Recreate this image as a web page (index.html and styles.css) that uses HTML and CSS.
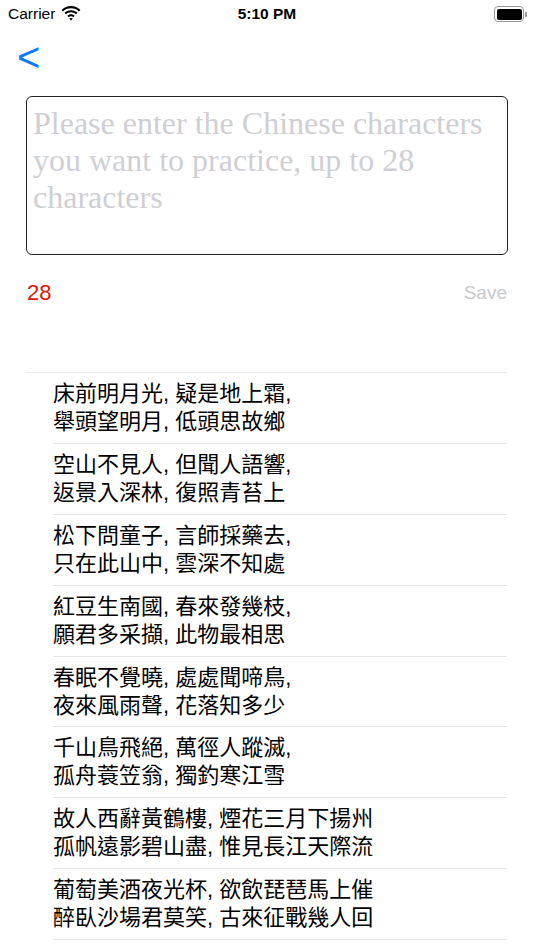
FILE: index.html
```html
<!DOCTYPE html>
<html>
<head>
<meta charset="utf-8">
<link rel="stylesheet" href="styles.css">
</head>
<body>
<div class="screen">
  <div class="status">
    <div class="status-left">
      <span class="carrier">Carrier</span>
      <svg class="wifi" width="20" height="15" viewBox="0 0 20 15">
        <path d="M10 2.2c3.1 0 5.9 1.2 8 3.2l1.4-1.5C16.9 1.5 13.6 0 10 0S3.1 1.5.6 3.9L2 5.4c2.1-2 4.9-3.2 8-3.2z" fill="#000"/>
        <path d="M10 6.3c2 0 3.8.8 5.1 2l1.4-1.5C14.8 5.2 12.5 4.2 10 4.2S5.2 5.2 3.5 6.8l1.4 1.5c1.3-1.2 3.1-2 5.1-2z" fill="#000"/>
        <path d="M10 10.3c.9 0 1.7.3 2.3.9l1.4-1.5c-1-.9-2.3-1.5-3.7-1.5s-2.7.6-3.7 1.5l1.4 1.5c.6-.6 1.4-.9 2.3-.9z" fill="#000"/>
        <path d="M10 14.6l1.9-2c-.5-.4-1.2-.7-1.9-.7s-1.4.3-1.9.7z" fill="#000"/>
      </svg>
    </div>
    <div class="time">5:10 PM</div>
    <div class="status-right">
      <div class="battery"><div class="battery-fill"></div></div>
      <div class="battery-nub"></div>
    </div>
  </div>

  <div class="nav">
    <span class="back">&lt;</span>
  </div>

  <div class="editor">
    <div class="placeholder">Please enter the Chinese characters you want to practice, up to 28 characters</div>
  </div>

  <div class="meta">
    <span class="count">28</span>
    <span class="save">Save</span>
  </div>

  <div class="list">
    <div class="row"><div class="cell">床前明月光, 疑是地上霜,<br>舉頭望明月, 低頭思故鄉</div></div>
    <div class="row"><div class="cell">空山不見人, 但聞人語響,<br>返景入深林, 復照青苔上</div></div>
    <div class="row"><div class="cell">松下問童子, 言師採藥去,<br>只在此山中, 雲深不知處</div></div>
    <div class="row"><div class="cell">紅豆生南國, 春來發幾枝,<br>願君多采擷, 此物最相思</div></div>
    <div class="row"><div class="cell">春眠不覺曉, 處處聞啼鳥,<br>夜來風雨聲, 花落知多少</div></div>
    <div class="row"><div class="cell">千山鳥飛絕, 萬徑人蹤滅,<br>孤舟蓑笠翁, 獨釣寒江雪</div></div>
    <div class="row"><div class="cell">故人西辭黃鶴樓, 煙花三月下揚州<br>孤帆遠影碧山盡, 惟見長江天際流</div></div>
    <div class="row"><div class="cell">葡萄美酒夜光杯, 欲飲琵琶馬上催<br>醉臥沙場君莫笑, 古來征戰幾人回</div></div>
  </div>
</div>
</body>
</html>
```

FILE: styles.css
```css
html, body {
  margin: 0;
  padding: 0;
  background: #fff;
}
.screen {
  width: 534px;
  height: 950px;
  overflow: hidden;
  font-family: "Liberation Sans", "Noto Sans CJK TC", sans-serif;
  color: #000;
}
.status {
  height: 28px;
  display: flex;
  align-items: center;
  justify-content: space-between;
  padding: 0 7px 0 8px;
  position: relative;
  font-size: 15.5px;
}
.status-left {
  display: flex;
  align-items: center;
  gap: 6px;
}
.wifi { margin-top: -1px; }
.time {
  position: absolute;
  left: 0;
  right: 0;
  text-align: center;
  font-weight: bold;
  pointer-events: none;
}
.status-right {
  display: flex;
  align-items: center;
  gap: 1px;
}
.battery {
  width: 25px;
  height: 11px;
  border: 1.5px solid #999;
  border-radius: 4px;
  padding: 1.5px;
  box-sizing: content-box;
}
.battery-fill {
  width: 100%;
  height: 100%;
  background: #000;
  border-radius: 2px;
}
.battery-nub {
  width: 2px;
  height: 5px;
  background: #999;
  border-radius: 0 1px 1px 0;
}
.nav {
  height: 68px;
  padding-left: 17px;
}
.back {
  display: block;
  color: #0a7aff;
  font-size: 40px;
  line-height: 58px;
  font-family: "Liberation Sans", sans-serif;
}
.editor {
  margin: 0 26px;
  border: 1px solid #222;
  border-radius: 6px;
  padding: 8px 4px 8px 6px;
  box-sizing: border-box;
  height: 159px;
}
.placeholder {
  font-family: "Liberation Serif", serif;
  font-size: 32px;
  line-height: 37px;
  color: #cfcfd3;
}
.meta {
  display: flex;
  justify-content: space-between;
  align-items: center;
  margin: 0 27px;
  height: 76px;
}
.count {
  color: #e0140f;
  font-size: 22px;
}
.save {
  color: #c9c9ce;
  font-size: 19px;
}
.list {
  margin: 41px 27px 0 26px;
  border-top: 1px solid #ececee;
}
.row {
  padding-left: 27px;
}
.cell {
  border-bottom: 1px solid #e4e4e6;
  font-size: 22px;
  line-height: 28px;
  padding-top: 7px;
  box-sizing: border-box;
  height: 70.9px;
}
```
